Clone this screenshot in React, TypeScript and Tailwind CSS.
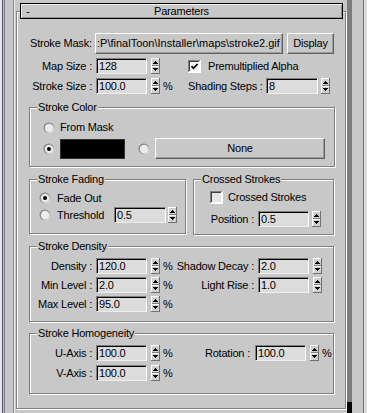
import type React from 'react';

// classic 3ds Max rollout: "Parameters" panel of the finalToon material

const Spinner: React.FC<{ className?: string }> = ({ className = '' }) => (
  <svg width="9" height="16" viewBox="0 0 9 16" className={`shrink-0 ${className}`}>
    <rect width="9" height="16" fill="#d0d0d0" />
    <rect x="0" y="0" width="9" height="1" fill="#fff" />
    <rect x="0" y="0" width="1" height="16" fill="#fff" />
    <rect x="8" y="0" width="1" height="16" fill="#707070" />
    <rect x="0" y="15" width="9" height="1" fill="#707070" />
    <rect x="1" y="7" width="7" height="1" fill="#808080" />
    <rect x="1" y="8" width="7" height="1" fill="#fff" />
    {/* up */}
    <rect x="4" y="3" width="1" height="1" fill="#000" />
    <rect x="3" y="4" width="3" height="1" fill="#000" />
    <rect x="2" y="5" width="5" height="1" fill="#000" />
    {/* down */}
    <rect x="2" y="10" width="5" height="1" fill="#000" />
    <rect x="3" y="11" width="3" height="1" fill="#000" />
    <rect x="4" y="12" width="1" height="1" fill="#000" />
  </svg>
);

const Radio: React.FC<{ checked?: boolean }> = ({ checked = false }) => (
  <svg width="12" height="12" viewBox="0 0 12 12" className="shrink-0">
    <defs>
      <linearGradient id="rg" x1="0" y1="0" x2="1" y2="1">
        <stop offset="0" stopColor="#6a6a6a" />
        <stop offset="0.55" stopColor="#a0a0a0" />
        <stop offset="1" stopColor="#ffffff" />
      </linearGradient>
    </defs>
    <circle cx="6" cy="6" r="5.5" fill="url(#rg)" />
    <circle cx="6" cy="6" r="4.2" fill="#ececec" />
    {checked && <circle cx="6" cy="6" r="2" fill="#000" />}
  </svg>
);

const Checkbox: React.FC<{ checked?: boolean }> = ({ checked = false }) => (
  <svg width="13" height="13" viewBox="0 0 13 13" className="shrink-0">
    <rect width="13" height="13" fill="#ffffff" />
    <rect x="0" y="0" width="12" height="1" fill="#808080" />
    <rect x="0" y="0" width="1" height="12" fill="#808080" />
    <rect x="1" y="1" width="10" height="1" fill="#404040" />
    <rect x="1" y="1" width="1" height="10" fill="#404040" />
    <rect x="2" y="2" width="9" height="9" fill={checked ? '#f4f4f4' : '#e6e6e6'} />
    {checked && <path d="M3.5 6.2L5.5 8.3L9.6 4" stroke="#000" strokeWidth="1.8" fill="none" />}
  </svg>
);

const Field: React.FC<{ value: string; className?: string }> = ({ value, className = '' }) => (
  <div
    className={`flex h-[16px] shrink-0 items-center overflow-hidden whitespace-nowrap border border-t-[#808080] border-l-[#808080] border-r-white border-b-[#eeeeee] bg-[#dcdcdc] pl-[2px] leading-none shadow-[inset_1px_1px_0_#000] ${className}`}
  >
    {value}
  </div>
);

const Button: React.FC<{ children: React.ReactNode; className?: string }> = ({
  children,
  className = '',
}) => (
  <div
    className={`flex shrink-0 items-center overflow-hidden whitespace-nowrap border border-t-white border-l-white border-r-[#606060] border-b-[#606060] bg-[#c8c8c8] leading-none shadow-[inset_-1px_-1px_0_#9a9a9a] ${className}`}
  >
    {children}
  </div>
);

const Group: React.FC<{ title: string; className?: string; children: React.ReactNode }> = ({
  title,
  className = '',
  children,
}) => (
  <div
    className={`flex shrink-0 flex-col border border-[#808080] shadow-[inset_1px_1px_0_#fff,1px_1px_0_#fff] ${className}`}
  >
    <span className="-mt-[7px] ml-[7px] self-start bg-[#c8c8c8] px-[1px] leading-[13px]">
      {title}
    </span>
    {children}
  </div>
);

// label | field | spinner | % — label column ends at x=92
const ValueRow: React.FC<{ label: string; value: string; pct?: boolean }> = ({
  label,
  value,
  pct = false,
}) => (
  <div className="flex w-[140px] shrink-0 items-center">
    <span className="w-[62px] shrink-0 text-right whitespace-nowrap">{label}</span>
    <Field value={value} className="ml-[4px] w-[51px]" />
    <Spinner className="ml-[4px]" />
    {pct && <span className="ml-[3px]">%</span>}
  </div>
);

export default function App() {
  return (
    <div className="flex h-[413px] w-[367px] overflow-hidden bg-[#c8c8c8] font-['Liberation_Sans',Arial,sans-serif] text-[11px] tracking-[-0.2px] text-black">
      {/* left frame */}
      <div className="flex h-full w-[16px] shrink-0">
        <div className="w-[2px] bg-[#e4e4e4]" />
        <div className="w-[1px] bg-[#5c5c74]" />
        <div className="w-[1px] bg-[#b8b8c8]" />
        <div className="w-[1px] bg-[#7c7c90]" />
        <div className="w-[8px]" />
        <div className="w-[1px] bg-[#888888]" />
        <div className="w-[1px] bg-[#f0f0f0]" />
        <div className="w-[1px]" />
      </div>

      {/* rollout */}
      <div className="flex w-[330px] shrink-0 flex-col pt-[3px] pb-[4px]">
        <div className="relative z-10 ml-[4px] mr-[3px] flex h-[16px] shrink-0 items-center border border-black bg-[#c8c8c8] leading-none shadow-[inset_1px_1px_0_#f4f4f4,inset_-1px_-1px_0_#909090]">
          <span className="w-[16px] pl-[5px]">-</span>
          <span className="flex-1 pr-[16px] text-center">Parameters</span>
        </div>

        <div className="-mt-[8px] flex flex-1 flex-col border border-[#808080] pt-[21px] pl-[12px] shadow-[inset_1px_1px_0_#fff,1px_1px_0_#fff]">
          {/* stroke mask */}
          <div className="flex h-[21px] items-center pl-[1px]">
            <span className="w-[65px] shrink-0 whitespace-nowrap">Stroke Mask:</span>
            <Button className="h-full w-[188px] pl-[1px] tracking-normal">
              {':P\\finalToon\\Installer\\maps\\stroke2.gif'}
            </Button>
            <Button className="ml-[4px] h-full w-[47px] justify-center">Display</Button>
          </div>

          <div className="mt-[4px] flex h-[16px] items-center pl-[1px]">
            <div className="w-[158px] shrink-0">
              <ValueRow label="Map Size :" value="128" />
            </div>
            <Checkbox checked />
            <span className="ml-[7px] whitespace-nowrap">Premultiplied Alpha</span>
          </div>

          <div className="mt-[4px] flex h-[16px] items-center pl-[1px]">
            <div className="w-[158px] shrink-0">
              <ValueRow label="Stroke Size :" value="100.0" pct />
            </div>
            <span className="w-[74px] shrink-0 text-right whitespace-nowrap">Shading Steps :</span>
            <Field value="8" className="ml-[4px] w-[52px]" />
            <Spinner className="ml-[3px]" />
          </div>

          {/* stroke color */}
          <Group title="Stroke Color" className="mt-[13px] h-[60px] w-[306px]">
            <div className="mt-[6px] flex h-[15px] items-center pl-[13px]">
              <Radio />
              <span className="ml-[5px]">From Mask</span>
            </div>
            <div className="mt-[3px] flex h-[21px] items-center pl-[13px]">
              <Radio checked />
              <div className="ml-[5px] h-[20px] w-[65px] shrink-0 border border-[#303030] bg-black" />
              <div className="ml-[13px]">
                <Radio />
              </div>
              <Button className="ml-[5px] h-[21px] w-[170px] justify-center">None</Button>
            </div>
          </Group>

          <div className="mt-[12px] flex gap-[7px]">
            <Group title="Stroke Fading" className="h-[55px] w-[157px]">
              <div className="mt-[5px] flex h-[14px] items-center pl-[9px]">
                <Radio checked />
                <span className="ml-[6px]">Fade Out</span>
              </div>
              <div className="mt-[2px] flex h-[16px] items-center pl-[9px]">
                <Radio />
                <span className="ml-[6px] w-[57px] shrink-0">Threshold</span>
                <Field value="0.5" className="w-[52px]" />
                <Spinner className="ml-[2px]" />
              </div>
            </Group>

            <Group title="Crossed Strokes" className="h-[56px] w-[141px]">
              <div className="mt-[5px] flex h-[13px] items-center pl-[16px]">
                <Checkbox />
                <span className="ml-[5px] whitespace-nowrap">Crossed Strokes</span>
              </div>
              <div className="mt-[7px] flex h-[16px] items-center">
                <span className="w-[60px] shrink-0 text-right">Position :</span>
                <Field value="0.5" className="ml-[4px] w-[51px]" />
                <Spinner className="ml-[3px]" />
              </div>
            </Group>
          </div>

          {/* stroke density */}
          <Group title="Stroke Density" className="mt-[11px] h-[76px] w-[305px]">
            <div className="mt-[5px] flex h-[16px] items-center">
              <ValueRow label="Density :" value="120.0" pct />
              <span className="w-[84px] shrink-0 text-right whitespace-nowrap">Shadow Decay :</span>
              <Field value="2.0" className="ml-[4px] w-[51px]" />
              <Spinner className="ml-[4px]" />
            </div>
            <div className="mt-[3px] flex h-[16px] items-center">
              <ValueRow label="Min Level :" value="2.0" pct />
              <span className="w-[84px] shrink-0 text-right whitespace-nowrap">Light Rise :</span>
              <Field value="1.0" className="ml-[4px] w-[51px]" />
              <Spinner className="ml-[4px]" />
            </div>
            <div className="mt-[3px] flex h-[16px] items-center">
              <ValueRow label="Max Level :" value="95.0" pct />
            </div>
          </Group>

          {/* stroke homogeneity */}
          <Group title="Stroke Homogeneity" className="mt-[11px] h-[61px] w-[305px]">
            <div className="mt-[5px] flex h-[16px] items-center">
              <ValueRow label="U-Axis :" value="100.0" pct />
              <span className="w-[80px] shrink-0 text-right whitespace-nowrap">Rotation :</span>
              <Field value="100.0" className="ml-[5px] w-[51px]" />
              <Spinner className="ml-[4px]" />
              <span className="ml-[3px]">%</span>
            </div>
            <div className="mt-[4px] flex h-[16px] items-center">
              <ValueRow label="V-Axis :" value="100.0" pct />
            </div>
          </Group>
        </div>
      </div>

      {/* right frame / scroll indicator */}
      <div className="flex h-full w-[21px] shrink-0">
        <div className="w-[1px]" />
        <div className="flex w-[5px] flex-col bg-[#7c7c7c]">
          <div className="mt-auto h-[11px] bg-black" />
        </div>
        <div className="w-[11px]" />
        <div className="w-[1px] bg-[#707080]" />
        <div className="w-[3px] bg-[#dcdcdc]" />
      </div>
    </div>
  );
}
